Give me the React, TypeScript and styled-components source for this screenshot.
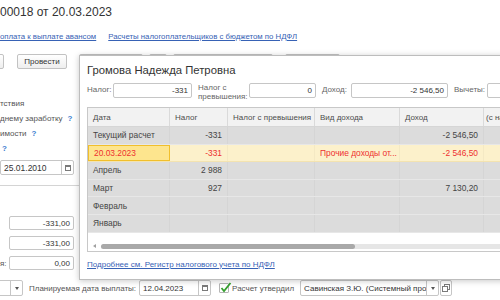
import React from "react";
import styled, { createGlobalStyle } from "styled-components";

const textDark = "#333333";
const labelGray = "#555555";
const linkBlue = "#3762b5";
const fieldBorder = "#c6c6c6";
const redText = "#ee3030";

const GlobalStyle = createGlobalStyle`
  html, body { margin: 0; padding: 0; background: #ffffff; }
  body { font-family: "Liberation Sans", Arial, sans-serif; }
  * { box-sizing: border-box; }
`;

const Page = styled.div`
  position: relative;
  width: 500px;
  height: 300px;
  overflow: hidden;
  background: #ffffff;
  color: ${labelGray};
  font-size: 8px;
`;

const DocTitle = styled.div`
  padding-top: 5px;
  height: 20px;
  line-height: 14px;
  font-size: 12px;
  color: ${textDark};
  white-space: nowrap;
`;

const LinksRow = styled.div`
  display: flex;
  gap: 12px;
  margin-top: 12px;
  height: 10px;
  line-height: 10px;
  white-space: nowrap;
  font-size: 7.8px;
`;

const Link = styled.a`
  color: ${linkBlue};
  text-decoration: underline;
  cursor: pointer;
  white-space: nowrap;
`;

const Toolbar = styled.div`
  display: flex;
  margin-top: 12px;
  height: 15px;
`;

const ToolButton = styled.div<{ $w: number; $gap: number }>`
  flex-shrink: 0;
  width: ${p => p.$w}px;
  margin-left: ${p => p.$gap}px;
  height: 15px;
  border: 1px solid #c2c2c2;
  border-radius: 2px;
  background: linear-gradient(#ffffff, #eeeeee);
  display: flex;
  align-items: center;
  justify-content: center;
  color: ${textDark};
`;

const Body = styled.div`
  display: flex;
  margin-top: 27px;
`;

const LeftColumn = styled.div`
  width: 79px;
  display: flex;
  flex-direction: column;
`;

const CutLabel = styled.div`
  height: 15px;
  line-height: 15px;
  white-space: nowrap;
`;

const Help = styled.span<{ $gap: number }>`
  color: #3d7cd0;
  font-weight: bold;
  margin-left: ${p => p.$gap}px;
`;

const Field = styled.div<{ $w: number; $h?: number }>`
  flex-shrink: 0;
  display: flex;
  width: ${p => p.$w}px;
  height: ${p => p.$h ?? 15}px;
  border: 1px solid ${fieldBorder};
  border-radius: 2px;
  background: #ffffff;
  color: ${textDark};
  overflow: hidden;
`;

const FieldText = styled.div<{ $right?: boolean }>`
  flex: 1;
  min-width: 0;
  padding: 0 3px;
  display: flex;
  align-items: center;
  justify-content: ${p => (p.$right ? "flex-end" : "flex-start")};
  white-space: nowrap;
  overflow: hidden;
`;

const FieldButton = styled.div`
  flex-shrink: 0;
  width: 12px;
  border-left: 1px solid ${fieldBorder};
  display: flex;
  align-items: center;
  justify-content: center;
`;

const DateField = styled(Field)`
  margin-top: 4px;
  font-size: 8.5px;
`;

const Separator = styled.div`
  margin-top: 10px;
  height: 1px;
  background: #d4d4d4;
`;

const Amounts = styled.div`
  margin-top: 30px;
  display: flex;
  flex-direction: column;
  gap: 6px;
`;

const AmountRow = styled.div`
  display: flex;
  align-items: center;
  height: 14px;
`;

const AmountLabel = styled.div`
  width: 9px;
  white-space: nowrap;
`;

const BottomRow = styled.div`
  display: flex;
  align-items: center;
  margin-top: 10px;
  height: 16px;
  white-space: nowrap;
`;

const InlineLabel = styled.div<{ $gap: number }>`
  margin-left: ${p => p.$gap}px;
  flex-shrink: 0;
`;

const Check = styled.div`
  position: relative;
  flex-shrink: 0;
  width: 10px;
  height: 10px;
  margin-left: 8px;
  border: 1px solid #b5b5b5;
  border-radius: 1px;
  background: #ffffff;
`;

const CheckMark = styled.svg`
  position: absolute;
  left: 0px;
  top: -2px;
`;

const SmallButton = styled.div`
  flex-shrink: 0;
  width: 12px;
  height: 16px;
  margin-left: 1px;
  border: 1px solid ${fieldBorder};
  border-radius: 2px;
  display: flex;
  align-items: center;
  justify-content: center;
`;

/* ---------- popup ---------- */

const Popup = styled.div`
  position: absolute;
  left: 79px;
  top: 55px;
  width: 440px;
  height: 225px;
  background: #ffffff;
  border: 1px solid #bdbdbd;
  box-shadow: 0 1px 6px rgba(0, 0, 0, 0.22);
  padding: 7px 0 0 7px;
`;

const PopupTitle = styled.div`
  height: 14px;
  line-height: 14px;
  font-size: 11.3px;
  color: ${textDark};
  white-space: nowrap;
`;

const Filters = styled.div`
  display: flex;
  align-items: center;
  margin-top: 6px;
  height: 15px;
`;

const FilterLabel = styled.div<{ $w: number }>`
  flex-shrink: 0;
  width: ${p => p.$w}px;
  line-height: 8.5px;
  color: #666666;
  white-space: normal;
  padding-top: ${p => (p.$w > 40 ? 4 : 0)}px;
`;

const FilterField = styled(Field)`
  margin-right: 6px;
`;

const Table = styled.div`
  margin-top: 9px;
  width: 430px;
  border: 1px solid #c8c8c8;
  border-right: none;
`;

const HeaderRow = styled.div`
  display: flex;
  height: 19px;
  background: #f2f2f2;
  border-bottom: 1px solid #d6d6d6;
`;

const HeaderCell = styled.div<{ $w: number; $pad?: number }>`
  flex-shrink: 0;
  width: ${p => p.$w}px;
  padding-left: ${p => p.$pad ?? 5}px;
  border-right: 1px solid #dadada;
  display: flex;
  align-items: center;
  white-space: nowrap;
  overflow: hidden;
  color: #4d4d4d;
`;

const Row = styled.div<{ $current?: boolean }>`
  display: flex;
  height: 17.6px;
  font-size: 8.4px;
  background: ${p => (p.$current ? "#fcf1cb" : "#dcdcdc")};
  border-bottom: 1px solid ${p => (p.$current ? "#f3e3b0" : "#e7e7e7")};
  color: ${p => (p.$current ? redText : "#444444")};
`;

const Cell = styled.div<{ $w: number; $right?: boolean; $selected?: boolean }>`
  flex-shrink: 0;
  width: ${p => p.$w}px;
  padding: 0 5px;
  display: flex;
  align-items: center;
  justify-content: ${p => (p.$right ? "flex-end" : "flex-start")};
  white-space: nowrap;
  overflow: hidden;
  background: ${p => (p.$selected ? "#fde58e" : "transparent")};
  border: ${p => (p.$selected ? "1px solid #f1bf2c" : "none")};
  border-right: ${p => (p.$selected ? "1px solid #f1bf2c" : "1px solid rgba(0,0,0,0.03)")};
`;

const ScrollArea = styled.div`
  height: 18px;
  display: flex;
  align-items: flex-end;
  padding: 0 0 2px 5px;
  background: #ffffff;
`;

const ScrollArrow = styled.div`
  width: 8px;
  height: 5px;
  display: flex;
  align-items: center;
`;

const ScrollTrack = styled.div`
  flex: 1;
  height: 5px;
  border-radius: 3px;
  background: #e6e6e6;
`;

const ScrollThumb = styled.div`
  width: 254px;
  height: 5px;
  border-radius: 3px;
  background: #a9a9a9;
`;

const PopupLink = styled.div`
  margin-top: 8px;
  height: 10px;
  line-height: 10px;
`;

/* ---------- icons ---------- */

const CalendarIcon = () => (
  <svg width="6" height="6" viewBox="0 0 6 6">
    <rect x="0.5" y="0.5" width="5" height="5" fill="#ffffff" stroke="#7a7a7a" />
    <rect x="0" y="0" width="6" height="2" fill="#7a7a7a" />
  </svg>
);

const DropArrow = () => (
  <svg width="4" height="3" viewBox="0 0 4 3">
    <path d="M0 0 L4 0 L2 3 Z" fill="#555555" />
  </svg>
);

const LeftArrow = () => (
  <svg width="3" height="4" viewBox="0 0 3 4">
    <path d="M3 0 L3 4 L0 2 Z" fill="#a0a0a0" />
  </svg>
);

const OpenIcon = () => (
  <svg width="8" height="8" viewBox="0 0 8 8">
    <rect x="2.5" y="0.5" width="5" height="5" fill="none" stroke="#7a7a7a" />
    <rect x="0.5" y="2.5" width="5" height="5" fill="#ffffff" stroke="#7a7a7a" />
  </svg>
);

const cols = [82, 58, 87, 85, 84, 40];

type Line = {
  date: string;
  tax?: string;
  kind?: string;
  income?: string;
  current?: boolean;
};

const lines: Line[] = [
  { date: "Текущий расчет", tax: "-331", income: "-2 546,50" },
  { date: "20.03.2023", tax: "-331", kind: "Прочие доходы от...", income: "-2 546,50", current: true },
  { date: "Апрель", tax: "2 988" },
  { date: "Март", tax: "927", income: "7 130,20" },
  { date: "Февраль" },
  { date: "Январь" },
];

const App: React.FC = () => {
  return (
    <Page>
      <GlobalStyle />
      <DocTitle>00018 от 20.03.2023</DocTitle>
      <LinksRow>
        <Link>оплата к выплате авансом</Link>
        <Link>Расчеты налогоплательщиков с бюджетом по НДФЛ</Link>
      </LinksRow>
      <Toolbar>
        <ToolButton $w={30} $gap={-26} />
        <ToolButton $w={50} $gap={13}>Провести</ToolButton>
        <ToolButton $w={64} $gap={12} />
        <ToolButton $w={18} $gap={6} />
        <ToolButton $w={100} $gap={6} />
        <ToolButton $w={55} $gap={12} />
      </Toolbar>

      <Body>
        <LeftColumn>
          <CutLabel>тствия</CutLabel>
          <CutLabel>днему заработку<Help $gap={5}>?</Help></CutLabel>
          <CutLabel>имости<Help $gap={5}>?</Help></CutLabel>
          <CutLabel><Help $gap={2}>?</Help></CutLabel>
          <DateField $w={74}>
            <FieldText>25.01.2010</FieldText>
            <FieldButton><CalendarIcon /></FieldButton>
          </DateField>
          <Separator />
          <Amounts>
            <AmountRow>
              <AmountLabel />
              <Field $w={65} $h={14}><FieldText $right>-331,00</FieldText></Field>
            </AmountRow>
            <AmountRow>
              <AmountLabel />
              <Field $w={65} $h={14}><FieldText $right>-331,00</FieldText></Field>
            </AmountRow>
            <AmountRow>
              <AmountLabel>я:</AmountLabel>
              <Field $w={65} $h={14}><FieldText $right>0,00</FieldText></Field>
            </AmountRow>
          </Amounts>
        </LeftColumn>
      </Body>

      <BottomRow>
        <Field $w={40} $h={16} style={{ marginLeft: -17 }}>
          <FieldText />
          <FieldButton><DropArrow /></FieldButton>
        </Field>
        <InlineLabel $gap={6}>Планируемая дата выплаты:</InlineLabel>
        <Field $w={72} $h={16} style={{ marginLeft: 3 }}>
          <FieldText>12.04.2023</FieldText>
          <FieldButton><CalendarIcon /></FieldButton>
        </Field>
        <Check>
          <CheckMark width="12" height="11" viewBox="0 0 12 11">
            <path d="M1.5 6 L4 9 L10.5 1" fill="none" stroke="#35a02f" strokeWidth="1.8" />
          </CheckMark>
        </Check>
        <InlineLabel $gap={3}>Расчет утвердил</InlineLabel>
        <Field $w={139} $h={16} style={{ marginLeft: 6 }}>
          <FieldText>Савинская З.Ю. (Системный программист)</FieldText>
          <FieldButton><DropArrow /></FieldButton>
        </Field>
        <SmallButton><OpenIcon /></SmallButton>
      </BottomRow>

      <Popup>
        <PopupTitle>Громова Надежда Петровна</PopupTitle>
        <Filters>
          <FilterLabel $w={26}>Налог:</FilterLabel>
          <FilterField $w={79}><FieldText $right>-331</FieldText></FilterField>
          <FilterLabel $w={51}>Налог с превышения:</FilterLabel>
          <FilterField $w={67}><FieldText $right>0</FieldText></FilterField>
          <FilterLabel $w={29}>Доход:</FilterLabel>
          <FilterField $w={97}><FieldText $right>-2 546,50</FieldText></FilterField>
          <FilterLabel $w={33}>Вычеты:</FilterLabel>
          <FilterField $w={60}><FieldText $right /></FilterField>
        </Filters>
        <Table>
          <HeaderRow>
            <HeaderCell $w={cols[0]}>Дата</HeaderCell>
            <HeaderCell $w={cols[1]}>Налог</HeaderCell>
            <HeaderCell $w={cols[2]}>Налог с превышения</HeaderCell>
            <HeaderCell $w={cols[3]}>Вид дохода</HeaderCell>
            <HeaderCell $w={cols[4]}>Доход</HeaderCell>
            <HeaderCell $w={cols[5]} $pad={2}>(с начала года)</HeaderCell>
          </HeaderRow>
          {lines.map(l => (
            <Row key={l.date} $current={l.current}>
              <Cell $w={cols[0]} $selected={l.current}>{l.date}</Cell>
              <Cell $w={cols[1]} $right>{l.tax}</Cell>
              <Cell $w={cols[2]} $right />
              <Cell $w={cols[3]}>{l.kind}</Cell>
              <Cell $w={cols[4]} $right>{l.income}</Cell>
              <Cell $w={cols[5]} />
            </Row>
          ))}
          <ScrollArea>
            <ScrollArrow><LeftArrow /></ScrollArrow>
            <ScrollTrack><ScrollThumb /></ScrollTrack>
          </ScrollArea>
        </Table>
        <PopupLink>
          <Link>Подробнее см. Регистр налогового учета по НДФЛ</Link>
        </PopupLink>
      </Popup>
    </Page>
  );
};

export default App;
